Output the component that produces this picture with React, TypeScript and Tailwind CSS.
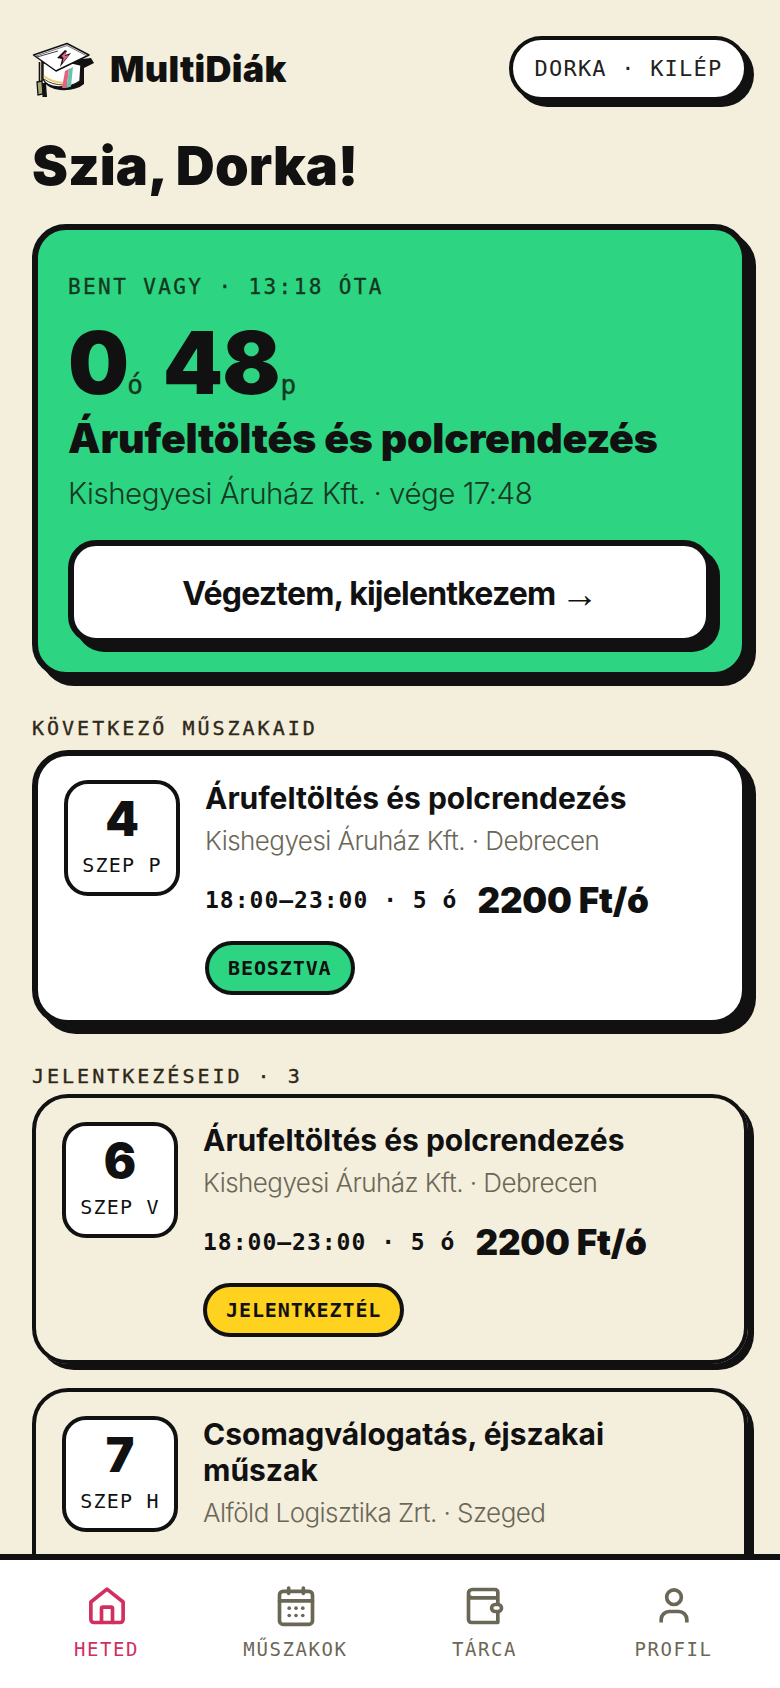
import React from "react";

const heavy = "[font-family:Inter,sans-serif] font-black";
const mono = "[font-family:'DejaVu_Sans_Mono',monospace]";
const medium = "[-webkit-text-stroke:0.35px_currentColor]";
const body = "[font-family:Inter,sans-serif]";

function Logo() {
  return (
    <svg width="64" height="60" viewBox="8 8 64 60" className="shrink-0">
      <path d="M20 36 L20 50 Q24 58 36 59 Q52 60 60 53 L60 37 L70 32 L67 27 L40 30 Z" fill="#111" />
      <path d="M19 32 L19 48 Q22 55 34 56 Q48 56 56 50 L57 34 L40 30 Z" fill="#fff" stroke="#111" strokeWidth="1.4" />
      <path d="M20 45 Q28 52 42 52" fill="none" stroke="#e9cf6c" strokeWidth="1.8" />
      <path d="M20 48 Q28 54 40 54" fill="none" stroke="#111" strokeWidth="0.8" />
      <path d="M41 40 L38 57 L42.5 57 L45 38 Z" fill="#e8607f" />
      <path d="M45 38 L42.5 57 L47 55.5 L49 36 Z" fill="#67c4ac" />
      <path d="M9.5 24 L43 12.5 L65 24 L32 40 Z" fill="#fff" stroke="#111" strokeWidth="1.5" strokeLinejoin="round" />
      <path d="M12 25 L43 14.5 L62 24.5" fill="none" stroke="#111" strokeWidth="0.6" />
      <path d="M33 27 L41 19 L43 20 L41 24 L47 22 L36 36 L38 28 Z" fill="#111" />
      <path d="M37.5 25 L42 20.5 L41 25 L45 24 L38.5 32 L39.5 27 Z" fill="#e8607f" />
      <path d="M13 26 L34 20" fill="none" stroke="#111" strokeWidth="0.8" />
      <path d="M15.5 31 L15.5 50 M18 30 L18 50" stroke="#111" strokeWidth="1.6" fill="none" />
      <path d="M13 51 L18 50 L19 63 L14 64 Z" fill="#a9a77a" stroke="#111" strokeWidth="1.3" />
      <path d="M18 52 L22 52 L23 66 L18.5 66 Z" fill="#111" />
    </svg>
  );
}

function HomeIcon() {
  return (
    <svg width="44" height="44" viewBox="0 0 24 24" fill="none" stroke="currentColor" strokeWidth="2" strokeLinejoin="round" strokeLinecap="round">
      <path d="M3.2 9.8 12 2.8l8.8 7V19.4a1.6 1.6 0 0 1-1.6 1.6H4.8a1.6 1.6 0 0 1-1.6-1.6z" />
      <path d="M9 21v-7.6a.8.8 0 0 1 .8-.8h4.4a.8.8 0 0 1 .8.8V21" />
    </svg>
  );
}

function CalendarIcon() {
  return (
    <svg width="44" height="44" viewBox="0 0 24 24" fill="none" stroke="currentColor" strokeWidth="2" strokeLinecap="round">
      <rect x="3" y="4" width="18" height="18" rx="2" />
      <path d="M3 9.2h18M8 2.2v3M16 2.2v3" />
      <g fill="currentColor" stroke="none">
        <circle cx="8.3" cy="13.2" r="1" /><circle cx="12" cy="13.2" r="1" /><circle cx="15.7" cy="13.2" r="1" />
        <circle cx="8.3" cy="17.2" r="1" /><circle cx="12" cy="17.2" r="1" /><circle cx="15.7" cy="17.2" r="1" />
      </g>
    </svg>
  );
}

function WalletIcon() {
  return (
    <svg width="44" height="44" viewBox="0 0 24 24" fill="none" stroke="currentColor" strokeWidth="2" strokeLinejoin="round">
      <path d="M19 7.6H5a2 2 0 0 1-2-2V5a2 2 0 0 1 2-2h12.4a1.6 1.6 0 0 1 1.6 1.6V21H4.6A1.6 1.6 0 0 1 3 19.4V5" />
      <rect x="15.6" y="11.2" width="5.4" height="3.8" rx="1.9" fill="#fff" />
    </svg>
  );
}

function UserIcon() {
  return (
    <svg width="44" height="44" viewBox="0 0 24 24" fill="none" stroke="currentColor" strokeWidth="2" strokeLinecap="butt">
      <circle cx="12" cy="7.2" r="4" />
      <path d="M5 21v-1.6a4.4 4.4 0 0 1 4.4-4.4h5.2a4.4 4.4 0 0 1 4.4 4.4V21" />
    </svg>
  );
}

function Label({ children, bottom }: { children: React.ReactNode; bottom: string }) {
  return (
    <div className={`${mono} ${medium} ${bottom} mt-9 h-7 text-[20px] leading-7 tracking-[3px] text-[#2e2818]`}>
      {children}
    </div>
  );
}

function ShiftCard({
  day, dow, title, place, pill, pillClass, cardClass, tail,
}: {
  day: string; dow: string; title: React.ReactNode; place: string; pill?: string; pillClass?: string; cardClass: string; tail?: boolean;
}) {
  return (
    <div className={`rounded-[36px] border-solid border-[#111] px-[26px] pt-6 flex gap-[25px] ${cardClass}`}>
      <div className="w-[116px] h-[116px] shrink-0 rounded-[24px] border-4 border-[#111] bg-white flex flex-col items-center">
        <div className={`${heavy} text-[48px] leading-[58px] mt-[6px] text-[#111]`}>{day}</div>
        <div className={`${mono} text-[20px] leading-6 mt-[5px] tracking-[1.2px] text-[#111]`}>{dow}</div>
      </div>
      <div className="flex-1 min-w-0">
        <div className={`${body} font-bold text-[30px] leading-[36px] text-[#111]`}>{title}</div>
        <div className={`${body} font-light text-[26px] leading-[34px] mt-2 tracking-[-0.55px] text-[#6b6757]`}>{place}</div>
        {tail && (
          <>
            <div className="flex items-center gap-[20px] mt-[20px] h-[44px]">
              <span className={`${mono} font-bold text-[23px] tracking-[1px] text-[#111]`}>18:00–23:00 · 5 ó</span>
              <span className={`${heavy} text-[35px] tracking-[-0.15px] text-[#111]`}>2200 Ft/ó</span>
            </div>
            <div className={`${mono} ${pillClass} inline-flex items-center mt-[19px] h-[54px] px-[19px] rounded-full border-4 border-[#111] font-bold text-[20px] tracking-[0.9px] text-[#111]`}>
              {pill}
            </div>
          </>
        )}
      </div>
    </div>
  );
}

function NavItem({ icon, label, active }: { icon: React.ReactNode; label: string; active?: boolean }) {
  return (
    <div className={`flex flex-col items-center ${active ? "text-[#d12f5f]" : "text-[#6b6757]"}`}>
      {icon}
      <span className={`${mono} text-[19px] leading-6 mt-[9px] tracking-[1.6px]`}>{label}</span>
    </div>
  );
}

export default function App() {
  return (
    <div className="h-[1688px] overflow-hidden bg-[#f4eedd] px-8">
      <header className="flex justify-between items-start pt-9 h-[130px]">
        <div className="flex items-center gap-[14px] pt-[3px]">
          <Logo />
          <span className={`${heavy} text-[36px] leading-10 tracking-[0.3px] text-[#111]`}>MultiDiák</span>
        </div>
        <div className={`${mono} w-[239px] h-[65px] flex items-center justify-center rounded-full border-4 border-[#111] bg-white shadow-[6px_6px_0_#111] text-[22px] tracking-[1.2px] text-[#222]`}>
          DORKA · KILÉP
        </div>
      </header>

      <h1 className={`${heavy} text-[54px] leading-[64px] mt-[4px] mb-[26px] text-[#111]`}>Szia, Dorka!</h1>

      <section className="rounded-[34px] border-[6px] border-[#111] bg-[#2dd481] shadow-[8px_8px_0_#111] px-[30px] pt-[43px] h-[454px]">
        <div className={`${mono} ${medium} text-[21px] leading-7 tracking-[2.4px] text-[#12391f]`}>BENT VAGY · 13:18 ÓTA</div>
        <div className="flex items-baseline mt-[17px] h-[90px]">
          <span className={`${heavy} text-[86px] leading-[90px] tracking-[-3px] text-[#111]`}>0</span>
          <span className={`${mono} ${medium} text-[26px] ml-[1px] text-[#12391f]`}>ó</span>
          <span className={`${heavy} text-[86px] leading-[90px] ml-[20px] tracking-[-1px] text-[#111]`}>48</span>
          <span className={`${mono} ${medium} text-[26px] ml-[1px] text-[#12391f]`}>p</span>
        </div>
        <div className={`${heavy} text-[41px] leading-[48px] mt-[6px] tracking-[-0.2px] text-[#111]`}>Árufeltöltés és polcrendezés</div>
        <div className={`${body} font-light text-[29.5px] leading-[40px] mt-[11px] tracking-[-0.5px] text-[#143a23]`}>Kishegyesi Áruház Kft. · vége 17:48</div>
        <div className={`${body} mt-[27px] h-[104px] pt-[3px] flex items-center justify-center gap-[5px] rounded-[28px] border-[6px] border-[#111] bg-white shadow-[8px_8px_0_#111] font-bold text-[32px] tracking-[-0.8px] text-[#111]`}>
          <span>Végeztem, kijelentkezem</span>
          <span className="[font-family:'Liberation_Sans',sans-serif] font-normal text-[38px] leading-none">→</span>
        </div>
      </section>

      <Label bottom="mb-2">KÖVETKEZŐ MŰSZAKAID</Label>
      <ShiftCard
        day="4" dow="SZEP P"
        title="Árufeltöltés és polcrendezés"
        place="Kishegyesi Áruház Kft. · Debrecen"
        pill="BEOSZTVA" pillClass="bg-[#2dd481]" tail
        cardClass="border-[6px] bg-white shadow-[8px_8px_0_#111] h-[276px]"
      />

      <Label bottom="mb-1">JELENTKEZÉSEID · 3</Label>
      <ShiftCard
        day="6" dow="SZEP V"
        title="Árufeltöltés és polcrendezés"
        place="Kishegyesi Áruház Kft. · Debrecen"
        pill="JELENTKEZTÉL" pillClass="bg-[#ffd21f]" tail
        cardClass="border-4 shadow-[6px_6px_0_#111] h-[270px]"
      />
      <div className="h-6" />
      <ShiftCard
        day="7" dow="SZEP H"
        title={<>Csomagválogatás, éjszakai<br />műszak</>}
        place="Alföld Logisztika Zrt. · Szeged"
        cardClass="border-4 shadow-[6px_6px_0_#111] h-[270px]"
      />

      <nav className="fixed bottom-0 inset-x-0 h-[134px] border-t-[6px] border-[#111] bg-white px-3 pt-6 grid grid-cols-4">
        <NavItem icon={<HomeIcon />} label="HETED" active />
        <NavItem icon={<CalendarIcon />} label="MŰSZAKOK" />
        <NavItem icon={<WalletIcon />} label="TÁRCA" />
        <NavItem icon={<UserIcon />} label="PROFIL" />
      </nav>
    </div>
  );
}
